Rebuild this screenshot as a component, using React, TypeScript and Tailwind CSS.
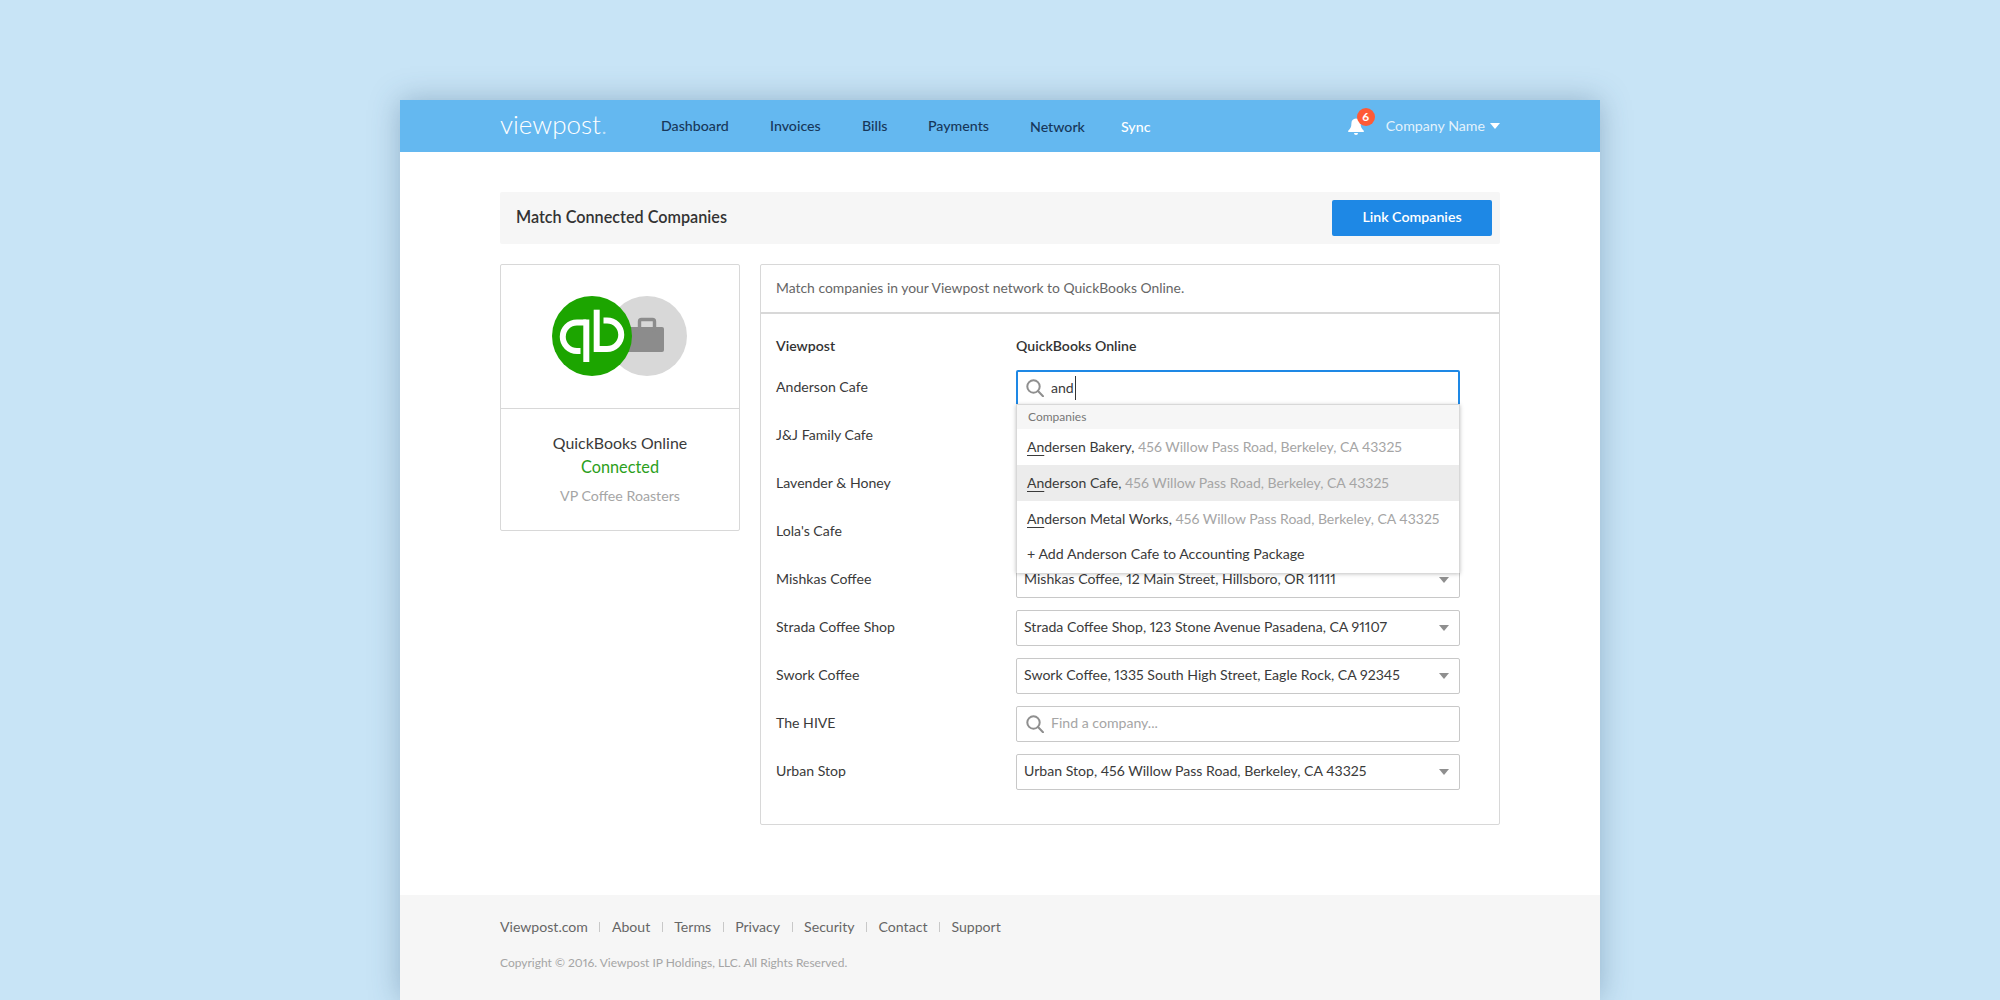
const nav = [
  { label: "Dashboard", cls: "w-[109px]" },
  { label: "Invoices", cls: "w-[92px]" },
  { label: "Bills", cls: "w-[66px]" },
  { label: "Payments", cls: "w-[102px]" },
  { label: "Network", cls: "w-[91px] mt-[1px]" },
];

const rows = [
  { name: "Anderson Cafe" },
  { name: "J&J Family Cafe" },
  { name: "Lavender & Honey" },
  { name: "Lola's Cafe" },
  { name: "Mishkas Coffee", value: "Mishkas Coffee, 12 Main Street, Hillsboro, OR 11111" },
  { name: "Strada Coffee Shop", value: "Strada Coffee Shop, 123 Stone Avenue Pasadena, CA 91107" },
  { name: "Swork Coffee", value: "Swork Coffee, 1335 South High Street, Eagle Rock, CA 92345" },
  { name: "The HIVE", search: true },
  { name: "Urban Stop", value: "Urban Stop, 456 Willow Pass Road, Berkeley, CA 43325" },
];

const matches = [
  { rest: "dersen Bakery,", active: false },
  { rest: "derson Cafe,", active: true },
  { rest: "derson Metal Works,", active: false },
];

const footerLinks = ["Viewpost.com", "About", "Terms", "Privacy", "Security", "Contact", "Support"];

const SearchIcon = () => (
  <svg width="18" height="18" viewBox="0 0 18 18" fill="none" stroke="#8f8f8f" strokeWidth="2" className="shrink-0">
    <circle cx="7.5" cy="7.5" r="6.2" />
    <path d="M12 12l5 5.2" strokeLinecap="round" />
  </svg>
);

const Caret = ({ color }: { color: string }) => (
  <svg width="10" height="6" viewBox="0 0 10 6" className="shrink-0">
    <polygon points="0,0 10,0 5,6" fill={color} />
  </svg>
);

const Logo = () => (
  <div className="relative w-[135px] h-[80px]">
    <div className="absolute left-[55px] top-0 w-[80px] h-[80px] rounded-full bg-[#d8d8d8]">
      <svg width="80" height="80" viewBox="0 0 80 80">
        <rect x="16" y="31" width="41" height="25" rx="2" fill="#8c8c8c" />
        <rect x="32.5" y="23.5" width="15" height="10" rx="2" fill="none" stroke="#8c8c8c" strokeWidth="3.4" />
      </svg>
    </div>
    <svg width="80" height="80" viewBox="0 0 80 80" className="absolute left-0 top-0">
      <circle cx="40" cy="40" r="40" fill="#1ca500" />
      <g fill="none" stroke="#fff" strokeWidth="6">
        <path d="M34.3 23.5V66" />
        <path d="M34.3 26.5H25a14.2 14.2 0 0 0 0 28.5h3.5" />
        <path d="M44.7 13.7V56" />
        <path d="M44.7 53H55a14.2 14.2 0 0 0 0-28.5h-3.5" />
      </g>
    </svg>
  </div>
);

export default function App() {
  return (
    <div className="h-[1000px] overflow-hidden bg-[#c8e4f6] pt-[100px] font-['Lato','Liberation_Sans',sans-serif] proportional-nums text-[14.1px] text-[#3a3a3a]">
      <div className="mx-auto w-[1200px] h-[900px] flex flex-col bg-white shadow-[0_0_28px_rgba(50,85,120,0.35)]">
        <header className="h-[52px] shrink-0 bg-[#64b8f0] pl-[100px] pr-[100px] flex items-center">
          <div className="w-[161px] text-[26px] leading-none font-light text-white -mt-[5px]">
            viewpost<span className="text-[#bfe0f7]">.</span>
          </div>
          <nav className="flex items-center text-[14.2px] font-medium text-[#17375a]">
            {nav.map((n) => (
              <span key={n.label} className={n.cls}>{n.label}</span>
            ))}
            <span className="text-white mt-[1px]">Sync</span>
          </nav>
          <div className="ml-auto flex items-center">
            <div className="relative mr-[22px]">
              <svg width="16" height="17" viewBox="0 0 16 17" className="block mt-[2px]">
                <path d="M8 0.5c-3 0-4.6 2.2-4.6 5 0 3.6-1.2 5.3-3.2 7.2V14h15.6v-1.3c-2-1.9-3.2-3.6-3.2-7.2 0-2.8-1.6-5-4.6-5z" fill="#fff" />
                <path d="M6 15h4a2 2 0 0 1-4 0z" fill="#fff" />
              </svg>
              <span className="absolute -top-[8px] left-[9px] w-[18px] h-[18px] rounded-full bg-[#ff5a36] text-white text-[12px] font-bold leading-[18px] text-center">6</span>
            </div>
            <span className="text-[14.2px] text-[#e3f2fc] mr-[5px]">Company Name</span>
            <Caret color="#fff" />
          </div>
        </header>

        <main className="flex-1 px-[100px] pt-[40px]">
          <div className="h-[52px] rounded-[2px] bg-[#f6f6f6] pl-4 pr-2 flex items-center justify-between">
            <h1 className="text-[16.2px] font-semibold text-[#333] -mt-[2px]">Match Connected Companies</h1>
            <button className="w-[160px] h-[36px] rounded-[2px] bg-[#1e88e5] pb-[2px] text-white text-[14.2px] font-semibold">Link Companies</button>
          </div>

          <div className="mt-5 flex gap-5 items-start">
            <aside className="w-[240px] h-[267px] shrink-0 rounded-[2px] border border-[#d8d8d8]">
              <div className="h-[144px] border-b border-[#d8d8d8] flex items-center justify-center pr-[1px] pb-[2px]">
                <Logo />
              </div>
              <div className="pt-[24px] flex flex-col items-center">
                <div className="text-[15.9px] leading-[20px] text-[#3a3a3a]">QuickBooks Online</div>
                <div className="mt-1 text-[16.3px] leading-[20px] text-[#2ca01c]">Connected</div>
                <div className="mt-[10px] text-[14.2px] leading-[18px] text-[#a5a5a5]">VP Coffee Roasters</div>
              </div>
            </aside>

            <section className="flex-1 h-[561px] rounded-[2px] border border-[#d8d8d8]">
              <div className="h-[49px] border-b-2 border-[#d8d8d8] px-[15px] flex items-center text-[13.9px] text-[#666]">
                Match companies in your Viewpost network to QuickBooks Online.
              </div>
              <div className="relative pl-[15px] pt-[21px]">
                <div className="flex h-[22px] items-center pb-[1px] font-semibold text-[#333]">
                  <span className="w-[240px]">Viewpost</span>
                  <span>QuickBooks Online</span>
                </div>
                <div className="mt-[13px] flex flex-col gap-[12px]">
                  {rows.map((r, i) => (
                    <div key={r.name} className="flex h-[36px] items-center">
                      <span className="w-[240px] shrink-0 -mt-[2px]">{r.name}</span>
                      {i === 0 ? (
                        <div className="w-[444px] h-[36px] rounded-[2px] border-2 border-[#1e88e5] pl-[8px] flex items-center gap-[7px]">
                          <SearchIcon />
                          <span className="text-[#3a3a3a] -mt-[1px]">and</span>
                          <span className="-ml-[6px] w-px h-[24px] bg-[#333]" />
                        </div>
                      ) : r.search ? (
                        <div className="w-[444px] h-[36px] rounded-[2px] border border-[#c8c8c8] pl-[9px] flex items-center gap-[7px]">
                          <SearchIcon />
                          <span className="text-[#a5a5a5] -mt-[2px]">Find a company...</span>
                        </div>
                      ) : (
                        <div className="w-[444px] h-[36px] rounded-[2px] border border-[#c8c8c8] pl-[7px] pr-[10px] flex items-center justify-between">
                          <span className="-mt-[2px]">{r.value}</span>
                          <Caret color="#8f8f8f" />
                        </div>
                      )}
                    </div>
                  ))}
                </div>

                <div className="absolute left-[255px] top-[90px] w-[444px] bg-white border-x border-[#d8d8d8] shadow-[0_1px_4px_rgba(0,0,0,0.25)]">
                  <div className="h-[25px] bg-[#f6f6f6] pl-[11px] flex items-center text-[12px] text-[#777] border-t border-[#d8d8d8]">Companies</div>
                  {matches.map((m) => (
                    <div key={m.rest} className={`h-[36px] pl-[10px] pb-[2px] flex items-center whitespace-pre text-[14px] ${m.active ? "bg-[#ececec]" : ""}`}>
                      <span className="underline underline-offset-[3px]">An</span>
                      <span>{m.rest} </span>
                      <span className="text-[#a5a5a5]">456 Willow Pass Road, Berkeley, CA 43325</span>
                    </div>
                  ))}
                  <div className="h-[36px] pl-[10px] pb-[2px] flex items-center text-[14.2px]">+ Add Anderson Cafe to Accounting Package</div>
                </div>
              </div>
            </section>
          </div>
        </main>

        <footer className="h-[105px] shrink-0 bg-[#f6f6f6] pl-[100px] pt-[23px]">
          <div className="flex items-center leading-[18px] text-[#666]">
            {footerLinks.map((l, i) => (
              <div key={l} className="flex items-center">
                {i > 0 && <span className="mx-[11.5px] w-px h-[10px] bg-[#c8c8c8]" />}
                <span>{l}</span>
              </div>
            ))}
          </div>
          <div className="mt-[20px] text-[12px] leading-[14px] text-[#a5a5a5]">Copyright © 2016. Viewpost IP Holdings, LLC. All Rights Reserved.</div>
        </footer>
      </div>
    </div>
  );
}
